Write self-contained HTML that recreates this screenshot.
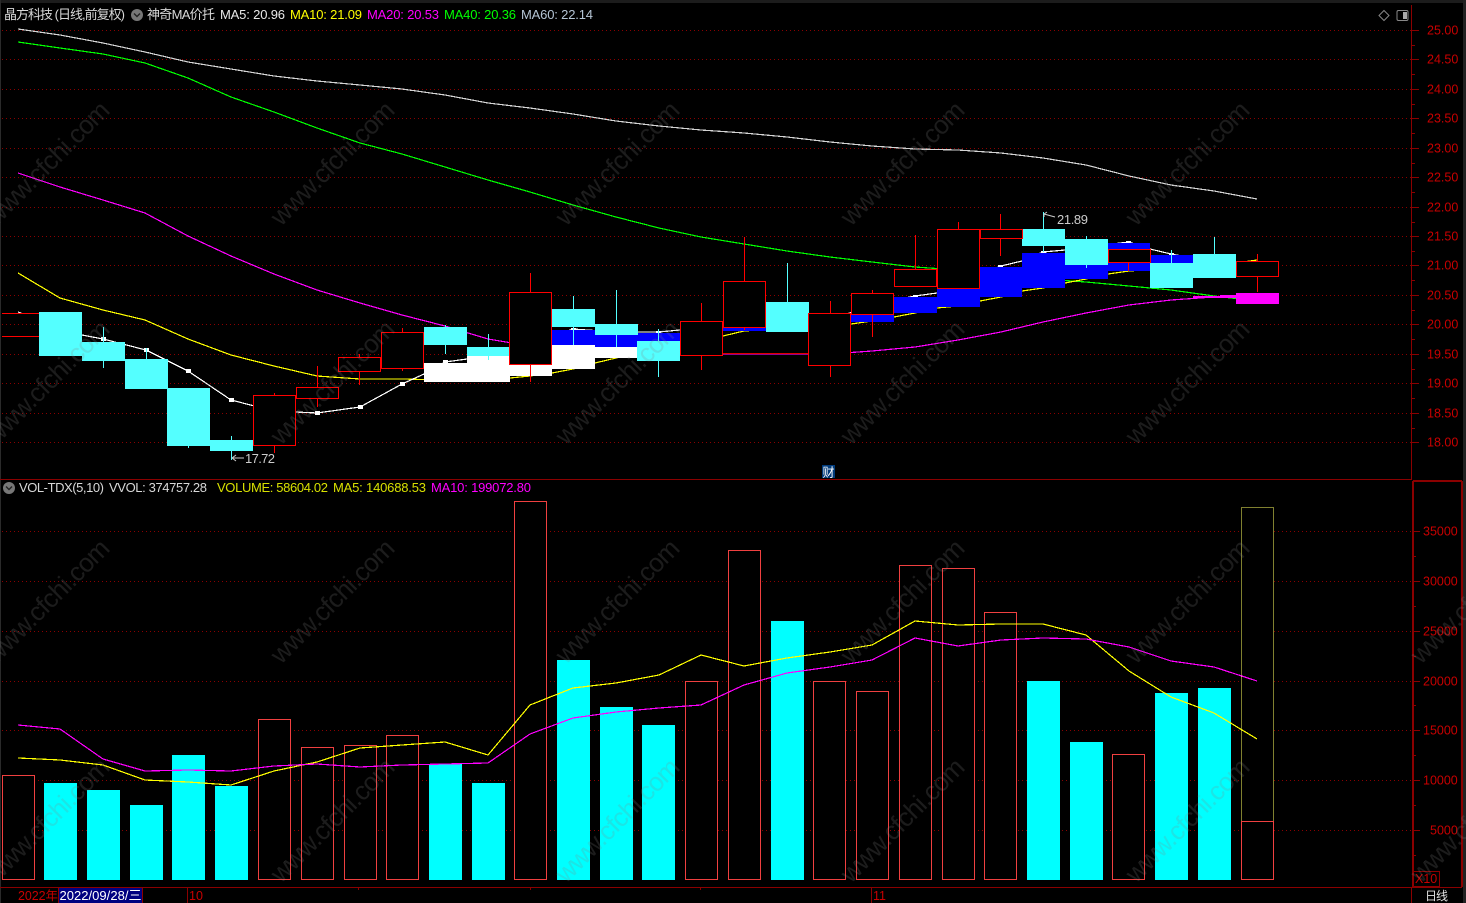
<!DOCTYPE html>
<html><head><meta charset="utf-8"><title>晶方科技</title>
<style>
html,body{margin:0;padding:0;background:#000;overflow:hidden}
svg{display:block;position:absolute;left:0;top:0}
text{font-family:"Liberation Sans","Noto Sans CJK SC",sans-serif}
.ax{fill:#c80000;font-size:12.5px}
.h{font-size:13px}
.wm{fill:rgba(130,130,130,.21);font-size:26px}
</style></head><body>
<svg width="1466" height="903" viewBox="0 0 1466 903" xmlns="http://www.w3.org/2000/svg">
<rect width="1466" height="903" fill="#000"/>
<!-- chrome -->
<rect x="0" y="0" width="1466" height="3" fill="#1c1c1c"/>
<rect x="0" y="0" width="1" height="903" fill="#2a2a2a"/>
<rect x="1463" y="0" width="3" height="903" fill="#222"/>
<!-- grid top -->
<g stroke="#8b0000" stroke-dasharray="1 3" stroke-width="1" shape-rendering="crispEdges">
<path d="M2 30.5H1412M2 59.5H1412M2 89.5H1412M2 118.5H1412M2 148.5H1412M2 177.5H1412M2 207.5H1412M2 236.5H1412M2 265.5H1412M2 295.5H1412M2 324.5H1412M2 354.5H1412M2 383.5H1412M2 413.5H1412M2 442.5H1412"/>
<path d="M2 531.5H1412M2 581.5H1412M2 631.5H1412M2 681.5H1412M2 730.5H1412M2 780.5H1412M2 830.5H1412"/>
</g>
<!-- frame / axis -->
<g fill="none" stroke="#8b0000" shape-rendering="crispEdges">
<path d="M1411.5 5V480" stroke-width="1"/>
<path d="M1412 30.5h7M1412 59.5h7M1412 89.5h7M1412 118.5h7M1412 148.5h7M1412 177.5h7M1412 207.5h7M1412 236.5h7M1412 265.5h7M1412 295.5h7M1412 324.5h7M1412 354.5h7M1412 383.5h7M1412 413.5h7M1412 442.5h7"/>
<path d="M1412 45.5h3M1412 74.5h3M1412 104.5h3M1412 133.5h3M1412 163.5h3M1412 192.5h3M1412 222.5h3M1412 251.5h3M1412 280.5h3M1412 310.5h3M1412 339.5h3M1412 369.5h3M1412 398.5h3M1412 428.5h3"/>
<path d="M0 479.5H1412"/>
<path d="M1413 481V887M1413 481H1462M1462 481V887" stroke-width="2"/>
<path d="M0 887.5H1462" stroke-width="1"/>
<path d="M1411.5 887V903"/>
<path d="M1413 531.5h7M1413 581.5h7M1413 631.5h7M1413 681.5h7M1413 730.5h7M1413 780.5h7M1413 830.5h7M1413 556.5h3M1413 606.5h3M1413 656.5h3M1413 705.5h3M1413 755.5h3M1413 805.5h3M1413 855.5h3"/>
<rect x="1413.5" y="871.5" width="26" height="15"/>
<path d="M58.5 888V903M142.5 888V903M187.5 888V903M871.5 888V903M358.5 887v3M530.5 887v3M700.5 887v3"/>
</g>
<g class="ax">
<text x="1427" y="34.5" class="ax">25.00</text><text x="1427" y="63.5" class="ax">24.50</text><text x="1427" y="93.5" class="ax">24.00</text><text x="1427" y="122.5" class="ax">23.50</text><text x="1427" y="152.5" class="ax">23.00</text><text x="1427" y="181.5" class="ax">22.50</text><text x="1427" y="211.5" class="ax">22.00</text><text x="1427" y="240.5" class="ax">21.50</text><text x="1427" y="269.5" class="ax">21.00</text><text x="1427" y="299.5" class="ax">20.50</text><text x="1427" y="328.5" class="ax">20.00</text><text x="1427" y="358.5" class="ax">19.50</text><text x="1427" y="387.5" class="ax">19.00</text><text x="1427" y="417.5" class="ax">18.50</text><text x="1427" y="446.5" class="ax">18.00</text>
<text x="1423" y="535.5" class="ax">35000</text><text x="1423" y="585.5" class="ax">30000</text><text x="1423" y="635.5" class="ax">25000</text><text x="1423" y="685.5" class="ax">20000</text><text x="1423" y="734.5" class="ax">15000</text><text x="1423" y="784.5" class="ax">10000</text><text x="1430" y="834.5" class="ax">5000</text>
<text x="1415" y="883" class="ax">X10</text>
<text x="18" y="900" class="ax" textLength="40">2022年</text>
<text x="189" y="900" class="ax">10</text>
<text x="873" y="900" class="ax">11</text>
</g>
<!-- bottom date -->
<rect x="59" y="888" width="83" height="15" fill="#000080"/>
<text x="59.5" y="900" font-size="13" fill="#fff" textLength="82">2022/09/28/三</text>
<text x="1425" y="900" font-size="12" fill="#e0e0e0" textLength="23">日线</text>
<!-- MA lines top -->
<g fill="none" stroke-width="1.2" shape-rendering="crispEdges">
<polyline stroke="#d4d4d4" points="18,29 60,35 103,43 145,52 188,62 231,69 274,76 317,81 360,85 402,89 445,95 488,103 530,108 573,114 616,121 659,126 701,130 744,133 787,137 830,142 872,146 915,149 958,150 1001,153 1043,158 1086,165 1129,176 1171,185 1214,191 1257,199"/>
<polyline stroke="#00ff00" points="18,42 60,48 103,54 145,63 188,78 231,97 274,112 317,128 360,143 402,154 445,167 488,180 530,192 573,205 616,217 659,228 701,237 744,244 787,251 830,257 872,262 915,267 958,270 1001,273 1043,279 1086,282 1129,286 1171,290 1214,296 1257,301"/>
<polyline stroke="#ff00ff" points="18,173 60,187 103,200 145,213 188,236 231,256 274,274 317,290 360,303 402,315 445,326 488,339 530,346 573,350 616,352 659,353 701,354 744,354.5 787,354.5 830,354 872,351 915,347 958,340 1001,332 1043,322 1086,313 1129,305 1171,300 1214,297 1257,295"/>
<polyline stroke="#ffff00" points="18,273 60,298 103,310 145,320 188,339 231,355 274,366 317,376 360,379 402,379 445,380 488,381 510,378 530,376 552,373 573,369 595,363 616,358 659,347 701,341 723,336 744,331 787,328 830,326 851,324 872,321 894,317 915,313 937,308 958,306 980,301 1001,297 1022,291 1043,288 1065,283 1086,279 1108,274 1129,271 1171,268 1214,264 1236,263 1257,260"/>
<polyline stroke="#ffffff" points="82,335 103,339 146,350 188,371 231,400 274,411 317,413 360,407 402,384 424,374 445,362 467,359 488,356 510,352 530,345 573,329 616,332 659,332 680,330 701,325 744,322 787,320 830,320 872,305 894,300 915,296 937,293 958,285 980,275 1001,266 1022,261 1043,252 1065,250 1086,247 1129,242 1150,249 1171,254 1193,258 1214,262 1257,268"/>
<path d="M18 312l4 1.5" stroke="#fff"/>
</g>
<!-- MA bands -->
<g shape-rendering="crispEdges">
<rect x="424" y="363" width="43" height="19" fill="#fff"/>
<rect x="467" y="356" width="43" height="26" fill="#fff"/>
<rect x="510" y="360" width="42" height="16" fill="#fff"/>
<rect x="552" y="345" width="43" height="24" fill="#fff"/>
<rect x="595" y="347" width="43" height="11" fill="#fff"/>
<rect x="552" y="330" width="43" height="15" fill="#0000ff"/>
<rect x="595" y="333" width="43" height="14" fill="#0000ff"/>
<rect x="638" y="333" width="42" height="10" fill="#0000ff"/>
<rect x="723" y="325" width="43" height="6" fill="#0000ff"/>
<rect x="851" y="312" width="43" height="10" fill="#0000ff"/>
<rect x="894" y="297" width="43" height="16" fill="#0000ff"/>
<rect x="937" y="289" width="43" height="18" fill="#0000ff"/>
<rect x="980" y="267" width="42" height="30" fill="#0000ff"/>
<rect x="1022" y="253" width="43" height="35" fill="#0000ff"/>
<rect x="1065" y="250" width="43" height="29" fill="#0000ff"/>
<rect x="1108" y="243" width="42" height="28" fill="#0000ff"/>
<rect x="1150" y="255" width="43" height="33" fill="#0000ff"/>
<rect x="1193" y="296" width="43" height="2" fill="#ff00ff"/>
<rect x="1220" y="295" width="16" height="3" fill="#ff00ff"/>
<rect x="1236" y="293" width="43" height="11" fill="#ff00ff"/>
<rect x="723" y="352" width="86" height="3" fill="#000"/>
<path d="M723 353.5H808" stroke="#e00000" fill="none"/>
<path d="M723 354.5H808" stroke="#900090" fill="none"/>
</g>
<g fill="#fff" shape-rendering="crispEdges">
<rect x="101" y="337" width="5" height="4"/><rect x="144" y="348" width="5" height="4"/><rect x="186" y="369" width="5" height="4"/><rect x="229" y="398" width="5" height="4"/><rect x="315" y="411" width="5" height="4"/><rect x="358" y="405" width="5" height="4"/><rect x="400" y="382" width="5" height="4"/><rect x="443" y="360" width="5" height="3"/><rect x="571" y="328" width="5" height="2"/><rect x="656" y="331" width="5" height="2"/><rect x="913" y="295" width="5" height="2"/><rect x="998" y="265" width="5" height="2"/><rect x="1041" y="251" width="5" height="2"/><rect x="1126" y="241" width="5" height="2"/><rect x="1169" y="253" width="5" height="2"/>
</g>
<!-- candles top: cyan -->
<g fill="#54ffff" shape-rendering="crispEdges">
<rect x="39" y="312" width="43" height="44"/>
<rect x="103" y="327" width="1" height="41"/><rect x="82" y="342" width="43" height="19"/>
<rect x="146" y="348" width="1" height="20"/><rect x="125" y="359" width="43" height="30"/>
<rect x="188" y="388" width="1" height="60"/><rect x="167" y="388" width="43" height="58"/>
<rect x="231" y="436" width="1" height="24"/><rect x="210" y="440" width="43" height="11"/>
<rect x="445" y="325" width="1" height="29"/><rect x="424" y="327" width="43" height="18"/>
<rect x="488" y="334" width="1" height="26"/><rect x="467" y="347" width="43" height="9"/>
<rect x="573" y="296" width="1" height="49"/><rect x="552" y="309" width="43" height="18"/>
<rect x="616" y="290" width="1" height="57"/><rect x="595" y="324" width="43" height="11"/>
<rect x="658" y="329" width="1" height="48"/><rect x="637" y="341" width="43" height="20"/>
<rect x="787" y="263" width="1" height="40"/><rect x="766" y="302" width="43" height="30"/>
<rect x="1043" y="212" width="1" height="40"/><rect x="1022" y="229" width="43" height="17"/>
<rect x="1086" y="236" width="1" height="32"/><rect x="1065" y="239" width="43" height="26"/>
<rect x="1171" y="250" width="1" height="14"/><rect x="1150" y="263" width="43" height="25"/>
<rect x="1214" y="237" width="1" height="18"/><rect x="1193" y="254" width="43" height="24"/>
</g>
<!-- candles top: red -->
<g fill="none" stroke="#ff0000" shape-rendering="crispEdges">
<path d="M2 313.5H39M2 336.5H39" />
<path d="M274.5 393V453M317.5 366V407M359.5 354V385M402.5 328V371M530.5 273V382M701.5 303V370M744.5 237V330M830.5 301V377M872.5 290V337M915.5 235V269M958.5 222V229M1000.5 214V256M1128.5 249V271M1257.5 254V292"/>
<g fill="#000">
<rect x="253.5" y="395.5" width="42" height="50"/>
<rect x="296.5" y="387.5" width="42" height="11"/>
<rect x="338.5" y="357.5" width="42" height="14"/>
<rect x="381.5" y="332.5" width="42" height="36"/>
<rect x="509.5" y="292.5" width="42" height="72"/>
<rect x="680.5" y="321.5" width="42" height="34"/>
<rect x="723.5" y="281.5" width="42" height="46"/>
<rect x="808.5" y="313.5" width="42" height="52"/>
<rect x="851.5" y="293.5" width="42" height="21"/>
<rect x="894.5" y="269.5" width="42" height="17"/>
<rect x="937.5" y="229.5" width="42" height="59"/>
<rect x="980.5" y="229.5" width="42" height="9"/>
<rect x="1108.5" y="249.5" width="42" height="13"/>
<rect x="1236.5" y="261.5" width="42" height="15"/>
</g>
</g>
<!-- labels -->
<path d="M232 458h12M232 458l4-3M232 458l4 3" stroke="#ccc" fill="none"/>
<text x="245" y="463" font-size="13" fill="#ccc" textLength="30">17.72</text>
<path d="M1044 214l11 3M1044 214l3-2M1044 214v3" stroke="#ccc" fill="none"/>
<text x="1057" y="224" font-size="13" fill="#ccc" textLength="31">21.89</text>
<rect x="822" y="465" width="13" height="13" fill="#003a7a"/>
<text x="822.5" y="476.5" font-size="12" fill="#fff">财</text>
<!-- header -->
<text x="4" y="19" class="h" fill="#d8d8d8" textLength="121">晶方科技 (日线,前复权)</text>
<circle cx="137" cy="15" r="6" fill="#777"/><path d="M134 13.5l3 3 3-3" stroke="#222" stroke-width="1.4" fill="none"/>
<text x="147" y="19" class="h" fill="#d8d8d8" textLength="68">神奇MA价托</text>
<text x="220" y="19" class="h" fill="#e8e8e8" textLength="65">MA5: 20.96</text>
<text x="290" y="19" class="h" fill="#ffff00" textLength="72">MA10: 21.09</text>
<text x="367" y="19" class="h" fill="#ff00ff" textLength="72">MA20: 20.53</text>
<text x="444" y="19" class="h" fill="#00ff00" textLength="72">MA40: 20.36</text>
<text x="521" y="19" class="h" fill="#b4c4d4" textLength="72">MA60: 22.14</text>
<path d="M1384 10.5l5 5-5 5-5-5z" stroke="#888" fill="none"/>
<rect x="1397" y="10.5" width="11" height="10" rx="1.5" stroke="#888" fill="none"/><rect x="1403" y="12" width="4" height="7" fill="#aaa"/>
<!-- vol header -->
<circle cx="9" cy="488" r="6" fill="#777"/><path d="M6 486.5l3 3 3-3" stroke="#222" stroke-width="1.4" fill="none"/>
<text x="19" y="492" class="h" fill="#d8d8d8" textLength="85">VOL-TDX(5,10)</text>
<text x="109" y="492" class="h" fill="#d8d8d8" textLength="98">VVOL: 374757.28</text>
<text x="217" y="492" class="h" fill="#d8e000" textLength="111">VOLUME: 58604.02</text>
<text x="333" y="492" class="h" fill="#d8e000" textLength="93">MA5: 140688.53</text>
<text x="431" y="492" class="h" fill="#ff00ff" textLength="100">MA10: 199072.80</text>
<!-- volume bars -->
<g fill="#00ffff" shape-rendering="crispEdges">
<rect x="44" y="783" width="33" height="97"/><rect x="87" y="790" width="33" height="90"/><rect x="130" y="805" width="33" height="75"/><rect x="172" y="755" width="33" height="125"/><rect x="215" y="786" width="33" height="94"/><rect x="429" y="764" width="33" height="116"/><rect x="472" y="783" width="33" height="97"/><rect x="557" y="660" width="33" height="220"/><rect x="600" y="707" width="33" height="173"/><rect x="642" y="725" width="33" height="155"/><rect x="771" y="621" width="33" height="259"/><rect x="1027" y="681" width="33" height="199"/><rect x="1070" y="742" width="33" height="138"/><rect x="1155" y="693" width="33" height="187"/><rect x="1198" y="688" width="33" height="192"/>
</g>
<g fill="#000" stroke="#f04040" shape-rendering="crispEdges">
<rect x="2.5" y="775.5" width="32" height="104"/><rect x="258.5" y="719.5" width="32" height="160"/><rect x="301.5" y="747.5" width="32" height="132"/><rect x="344.5" y="745.5" width="32" height="134"/><rect x="386.5" y="735.5" width="32" height="144"/><rect x="514.5" y="501.5" width="32" height="378"/><rect x="685.5" y="681.5" width="32" height="198"/><rect x="728.5" y="550.5" width="32" height="329"/><rect x="813.5" y="681.5" width="32" height="198"/><rect x="856.5" y="691.5" width="32" height="188"/><rect x="899.5" y="565.5" width="32" height="314"/><rect x="942.5" y="568.5" width="32" height="311"/><rect x="984.5" y="612.5" width="32" height="267"/><rect x="1112.5" y="754.5" width="32" height="125"/>
</g>
<rect x="1241.5" y="507.5" width="32" height="314" fill="#000" stroke="#ffff60" stroke-dasharray="1 1" shape-rendering="crispEdges"/>
<rect x="1241.5" y="821.5" width="32" height="58" fill="#000" stroke="#f04040" shape-rendering="crispEdges"/>
<!-- vol MAs -->
<g fill="none" stroke-width="1.2" shape-rendering="crispEdges">
<polyline stroke="#ffff00" points="18,758 60,760 103,765 145,780 188,782 231,785 274,771 317,762 360,748 402,745 445,742 488,755 530,705 573,688 616,683 659,675 701,655 744,666 787,658 830,652 872,645 915,621 958,625 1001,624 1043,624 1086,635 1129,671 1171,697 1214,713 1257,739"/>
<polyline stroke="#ff00ff" points="18,725 60,729 103,759 145,771 188,770 231,771 274,766 317,764 360,767 402,765 445,764 488,763 530,734 573,718 616,712 659,708 701,705 744,685 787,673 830,667 872,660 915,638 958,646 1001,640 1043,638 1086,639 1129,647 1171,661 1214,667 1257,681"/>
</g>
<!-- watermark -->
<g class="wm">
<text class="wm" textLength="163" transform="translate(-4,227) rotate(-45)">www.cfchi.com</text>
<text class="wm" textLength="163" transform="translate(281,227) rotate(-45)">www.cfchi.com</text>
<text class="wm" textLength="163" transform="translate(566,227) rotate(-45)">www.cfchi.com</text>
<text class="wm" textLength="163" transform="translate(851,227) rotate(-45)">www.cfchi.com</text>
<text class="wm" textLength="163" transform="translate(1136,227) rotate(-45)">www.cfchi.com</text>
<text class="wm" textLength="163" transform="translate(-4,446) rotate(-45)">www.cfchi.com</text>
<text class="wm" textLength="163" transform="translate(281,446) rotate(-45)">www.cfchi.com</text>
<text class="wm" textLength="163" transform="translate(566,446) rotate(-45)">www.cfchi.com</text>
<text class="wm" textLength="163" transform="translate(851,446) rotate(-45)">www.cfchi.com</text>
<text class="wm" textLength="163" transform="translate(1136,446) rotate(-45)">www.cfchi.com</text>
<text class="wm" textLength="163" transform="translate(-4,665) rotate(-45)">www.cfchi.com</text>
<text class="wm" textLength="163" transform="translate(281,665) rotate(-45)">www.cfchi.com</text>
<text class="wm" textLength="163" transform="translate(566,665) rotate(-45)">www.cfchi.com</text>
<text class="wm" textLength="163" transform="translate(851,665) rotate(-45)">www.cfchi.com</text>
<text class="wm" textLength="163" transform="translate(1136,665) rotate(-45)">www.cfchi.com</text>
<text class="wm" textLength="163" transform="translate(1421,665) rotate(-45)">www.cfchi.com</text>
<text class="wm" textLength="163" transform="translate(-4,884) rotate(-45)">www.cfchi.com</text>
<text class="wm" textLength="163" transform="translate(281,884) rotate(-45)">www.cfchi.com</text>
<text class="wm" textLength="163" transform="translate(566,884) rotate(-45)">www.cfchi.com</text>
<text class="wm" textLength="163" transform="translate(851,884) rotate(-45)">www.cfchi.com</text>
<text class="wm" textLength="163" transform="translate(1136,884) rotate(-45)">www.cfchi.com</text>
<text class="wm" textLength="163" transform="translate(1421,884) rotate(-45)">www.cfchi.com</text>
</g>
</svg>
</body></html>
